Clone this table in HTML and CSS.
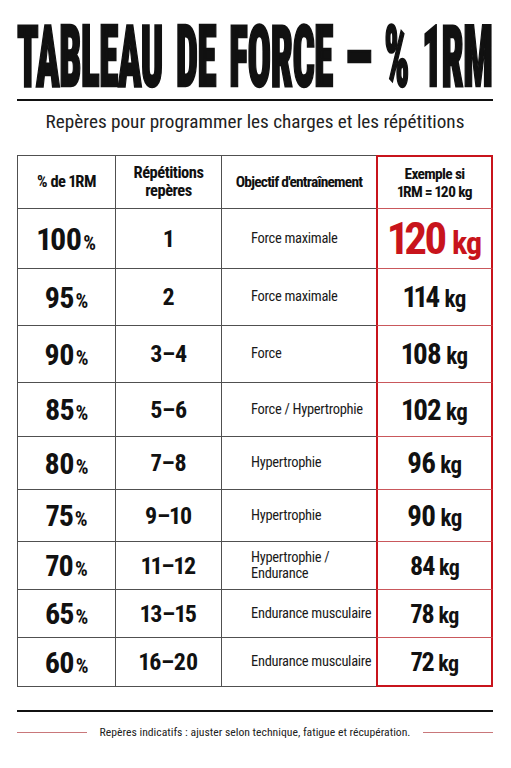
FILE: index.html
```html
<!DOCTYPE html>
<html lang="fr">
<head>
    <meta charset="utf-8" />
    <meta name="viewport" content="width=device-width, initial-scale=1" />
    <title>Tableau de force – % 1RM</title>
    <link rel="stylesheet" href="styles.css">
</head>
<body>
<div class="sheet">

    <header class="head">
        <h1 class="title"><span class="title__text">TABLEAU DE FORCE — % 1RM</span></h1>
        <p class="subtitle">Repères pour programmer les charges et les répétitions</p>
    </header>

    <table class="chart">
        <colgroup>
            <col class="c-pct"><col class="c-reps"><col class="c-goal"><col class="c-ex">
        </colgroup>
        <thead>
            <tr>
                <th>% de 1RM</th>
                <th>Répétitions<br>repères</th>
                <th class="th-goal">Objectif d'entraînement</th>
                <th class="ex">Exemple si<br>1RM = 120 kg</th>
            </tr>
        </thead>
        <tbody>
            <tr>
                <td class="pct pct--top">100<small>%</small></td>
                <td class="reps">1</td>
                <td class="goal">Force maximale</td>
                <td class="ex load load--top">120 <small>kg</small></td>
            </tr>
            <tr>
                <td class="pct">95<small>%</small></td>
                <td class="reps">2</td>
                <td class="goal">Force maximale</td>
                <td class="ex load">114 <small>kg</small></td>
            </tr>
            <tr>
                <td class="pct">90<small>%</small></td>
                <td class="reps">3–4</td>
                <td class="goal">Force</td>
                <td class="ex load">108 <small>kg</small></td>
            </tr>
            <tr>
                <td class="pct">85<small>%</small></td>
                <td class="reps">5–6</td>
                <td class="goal">Force / Hypertrophie</td>
                <td class="ex load">102 <small>kg</small></td>
            </tr>
            <tr>
                <td class="pct">80<small>%</small></td>
                <td class="reps">7–8</td>
                <td class="goal">Hypertrophie</td>
                <td class="ex load">96 <small>kg</small></td>
            </tr>
            <tr>
                <td class="pct">75<small>%</small></td>
                <td class="reps">9–10</td>
                <td class="goal">Hypertrophie</td>
                <td class="ex load">90 <small>kg</small></td>
            </tr>
            <tr class="row-sm">
                <td class="pct">70<small>%</small></td>
                <td class="reps">11–12</td>
                <td class="goal">Hypertrophie /<br>Endurance</td>
                <td class="ex load">84 <small>kg</small></td>
            </tr>
            <tr class="row-sm">
                <td class="pct">65<small>%</small></td>
                <td class="reps">13–15</td>
                <td class="goal">Endurance musculaire</td>
                <td class="ex load">78 <small>kg</small></td>
            </tr>
            <tr class="row-sm">
                <td class="pct">60<small>%</small></td>
                <td class="reps">16–20</td>
                <td class="goal">Endurance musculaire</td>
                <td class="ex load">72 <small>kg</small></td>
            </tr>
        </tbody>
    </table>

    <footer class="foot">
        <div class="foot__rule"></div>
        <p class="note">
            <span class="note__dash"></span>
            <span class="note__text">Repères indicatifs : ajuster selon technique, fatigue et récupération.</span>
            <span class="note__dash"></span>
        </p>
    </footer>

</div>
</body>
</html>
```
FILE: styles.css
```css
* {
    box-sizing: border-box; margin: 0; padding: 0;
}
body {
    background: #fff; color: #111;
    font-family: "Roboto Condensed", "Liberation Sans Narrow", "Liberation Sans", sans-serif;
}
.sheet {
    width: 511px; padding: 0 18px 0 17px;
}

/* title block */
.head {
    display: flex; flex-direction: column;
}
.title {
    height: 101px; padding-top: 22px; padding-bottom: 9px;
    font-size: 86px; line-height: 70px; font-weight: 900;
    white-space: nowrap;
    border-bottom: 2px solid #111;
}
.title__text {
    display: block; width: 100%;
    transform: scaleX(0.455); transform-origin: left center;
    letter-spacing: -1px; word-spacing: 10px;
    -webkit-text-stroke: 2.5px #111;
}
.subtitle {
    margin-top: 9px;
    font-size: 19.2px; line-height: 24px; color: #222;
    text-align: center;
}

/* table */
.chart {
    margin-top: 21px;
    width: 476px;
    border-collapse: separate; border-spacing: 0;
    table-layout: fixed;
    font-variant-numeric: proportional-nums;
}
.c-pct { width: 99px; }
.c-reps { width: 106px; }
.c-goal { width: 154px; }
.c-ex { width: 117px; }

.chart th, .chart td {
    border-right: 1px solid #505050;
    border-bottom: 1px solid #505050;
    text-align: center; vertical-align: middle;
}
.chart th:first-child, .chart td:first-child {
    border-left: 1px solid #505050;
}
.chart th {
    border-top: 1px solid #505050;
    height: 54px;
    font-size: 16.5px; line-height: 18px; font-weight: 700;
    letter-spacing: -0.5px;
}
.chart th.th-goal {
    font-size: 15.5px; letter-spacing: -0.8px;
}
.chart th.ex {
    font-size: 15.5px; letter-spacing: -0.7px;
}
.chart th:nth-child(3), .chart td:nth-child(3) {
    border-right: 0;
}
.chart .ex {
    border-left: 2px solid #c8141c;
    border-right: 2px solid #c8141c;
    border-bottom-color: #c9585c;
}
.chart th.ex {
    border-top: 2px solid #c8141c;
}
.chart tbody tr:last-child td.ex {
    border-bottom: 2px solid #c8141c;
}

.chart tbody tr:nth-child(1) { height: 60px; }
.chart tbody tr:nth-child(2) { height: 57px; }
.chart tbody tr:nth-child(3) { height: 57px; }
.chart tbody tr:nth-child(4) { height: 54px; }
.chart tbody tr:nth-child(5) { height: 53px; }
.chart tbody tr:nth-child(6) { height: 52px; }
.chart tbody tr:nth-child(7) { height: 48px; }
.chart tbody tr:nth-child(8) { height: 48px; }
.chart tbody tr:nth-child(9) { height: 49px; }

.pct {
    font-size: 30px; font-weight: 700; letter-spacing: -1px;
}
.pct small {
    font-size: 20px; font-weight: 700; letter-spacing: 0; margin-left: 2px;
}
.pct--top {
    font-size: 32px;
}
.reps {
    font-size: 24px; font-weight: 700; letter-spacing: -0.3px;
}
.goal {
    text-align: left !important;
    padding-left: 29px;
    font-size: 14.5px; line-height: 16px; color: #1a1a1a;
    letter-spacing: -0.3px;
}
.load {
    font-size: 29px; font-weight: 700; letter-spacing: -1.2px;
}
.load small {
    font-size: 23px; letter-spacing: -0.5px;
}
.row-sm .load {
    font-size: 26px;
}
.row-sm .load small {
    font-size: 22px;
}
.load--top {
    font-size: 45px; color: #c8141c; letter-spacing: -3px;
}
.load--top small {
    font-size: 32px; letter-spacing: -1px;
}

/* footer */
.foot {
    margin-top: 23px;
}
.foot__rule {
    height: 2px; background: #111;
}
.note {
    margin-top: 12px;
    display: flex; align-items: center; gap: 13px;
    font-size: 11.7px; line-height: 16px; color: #222;
}
.note__dash {
    flex: 1; height: 1px; background: #c9777a;
}
.note__text {
    white-space: nowrap;
}
```
